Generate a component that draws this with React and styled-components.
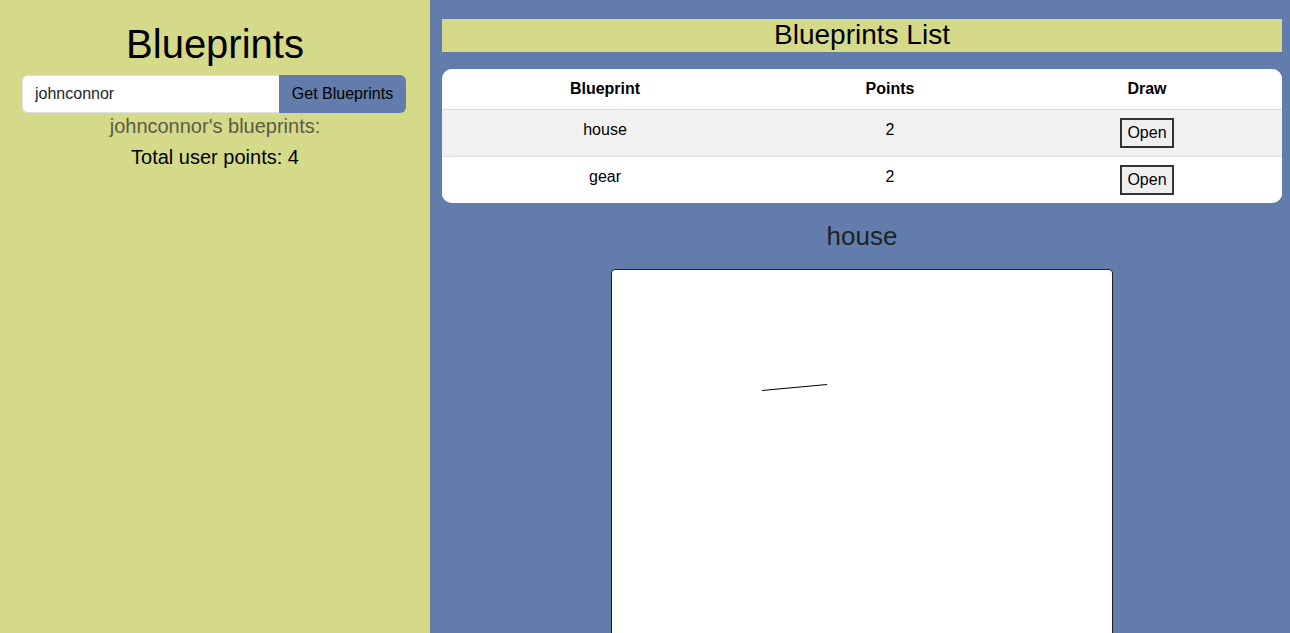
import styled, { createGlobalStyle } from "styled-components"

const GlobalStyle = createGlobalStyle`
    html, body {
        margin: 0;
        padding: 0;
        font-family: "Liberation Sans", Arial, sans-serif;
        overflow: hidden;
    }
`

const Page = styled.div`
    display: flex;
    height: 100vh;
    width: 100vw;
`

const SidePanel = styled.aside`
    width: 430px;
    flex-shrink: 0;
    background: #d5d98a;
    display: flex;
    flex-direction: column;
    align-items: center;
    padding-top: 20px;
    box-sizing: border-box;
`

const Title = styled.h1`
    margin: 0;
    font-size: 40px;
    font-weight: normal;
    line-height: 48px;
    color: #000;
`

const SearchGroup = styled.div`
    display: flex;
    width: 384px;
    height: 38px;
    margin-top: 7px;
    margin-right: 2px;
`

const SearchInput = styled.input`
    flex: 1;
    min-width: 0;
    border: 1px solid #e2e2e2;
    border-right: none;
    border-radius: 6px 0 0 6px;
    background: #fff;
    padding: 0 12px;
    font-family: inherit;
    font-size: 16px;
    color: #212529;
    outline: none;
`

const SearchButton = styled.button`
    width: 127px;
    border: none;
    border-radius: 0 6px 6px 0;
    background: #627dab;
    color: #000;
    font-family: inherit;
    font-size: 16px;
    padding: 0;
`

const Caption = styled.p`
    margin: 0;
    font-size: 20px;
    line-height: 26px;
    color: ${p => p.$muted ? "#5b5c45" : "#000"};
    margin-top: ${p => p.$gap || 0}px;
`

const MainPanel = styled.main`
    flex: 1;
    min-width: 0;
    background: #627dab;
    padding: 19px 8px 0 12px;
    display: flex;
    flex-direction: column;
    align-items: stretch;
    overflow: hidden;
    & > * { flex-shrink: 0; }
`

const ListBar = styled.h2`
    margin: 0;
    height: 33px;
    line-height: 32px;
    background: #d5d98a;
    text-align: center;
    font-size: 28px;
    font-weight: normal;
    color: #000;
`

const Card = styled.div`
    margin-top: 17px;
    background: #fff;
    border-radius: 10px;
    overflow: hidden;
`

const Row = styled.div`
    display: grid;
    grid-template-columns: 326px 244px 270px;
    height: ${p => p.$head ? 40 : 47}px;
    align-items: ${p => p.$head ? "center" : "start"};
    box-sizing: border-box;
    padding: ${p => p.$head ? "0" : "8px 0"};
    background: ${p => p.$shade ? "#f1f1f1" : "#fff"};
    border-top: ${p => p.$head ? "none" : "1px solid #dddddd"};
    font-size: 16px;
    line-height: 18px;
    font-weight: ${p => p.$head ? "bold" : "normal"};
    text-align: center;
    color: #000;
`

const Cell = styled.div`
    padding-top: ${p => p.$head ? 0 : 3}px;
`

const OpenButton = styled.button`
    height: 30px;
    width: 54px;
    border: 2px solid #333;
    background: #efefef;
    font-family: inherit;
    font-size: 16px;
    color: #000;
    padding: 0;
    margin: 0 auto;
    display: block;
`

const DrawTitle = styled.h3`
    margin: 17px 0 0;
    text-align: center;
    font-size: 26px;
    line-height: 32px;
    font-weight: normal;
    color: #222;
`

const Canvas = styled.div`
    margin: 17px auto 0;
    width: 500px;
    height: 500px;
    background: #fff;
    border: 1px solid #1f1f1f;
    border-radius: 4px;
    svg { display: block; }
`

const blueprints = [
    { name: "house", points: 2 },
    { name: "gear", points: 2 },
]

export default function App() {
    return (
        <>
            <GlobalStyle />
            <Page>
                <SidePanel>
                    <Title>Blueprints</Title>
                    <SearchGroup>
                        <SearchInput defaultValue="johnconnor" />
                        <SearchButton>Get Blueprints</SearchButton>
                    </SearchGroup>
                    <Caption $muted>johnconnor's blueprints:</Caption>
                    <Caption $gap={5}>Total user points: 4</Caption>
                </SidePanel>
                <MainPanel>
                    <ListBar>Blueprints List</ListBar>
                    <Card>
                        <Row $head>
                            <Cell $head>Blueprint</Cell>
                            <Cell $head>Points</Cell>
                            <Cell $head>Draw</Cell>
                        </Row>
                        {blueprints.map((bp, i) => (
                            <Row key={bp.name} $shade={i % 2 === 0}>
                                <Cell>{bp.name}</Cell>
                                <Cell>{bp.points}</Cell>
                                <div><OpenButton>Open</OpenButton></div>
                            </Row>
                        ))}
                    </Card>
                    <DrawTitle>house</DrawTitle>
                    <Canvas>
                        <svg width="500" height="500" viewBox="0 0 500 500">
                            <line x1="150" y1="120.5" x2="215" y2="114.5" stroke="#000" strokeWidth="1" />
                        </svg>
                    </Canvas>
                </MainPanel>
            </Page>
        </>
    )
}
